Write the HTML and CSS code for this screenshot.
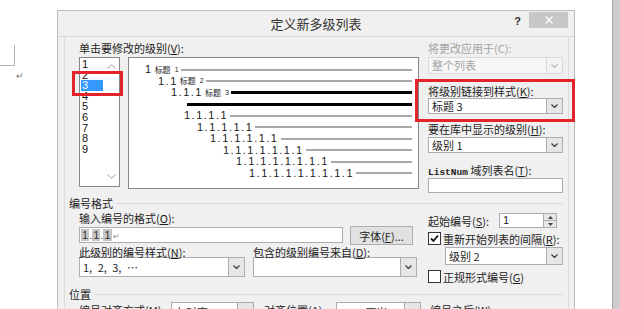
FILE: index.html
```html
<!DOCTYPE html>
<html lang="zh-CN">
<head>
  <meta charset="UTF-8">
  <title>定义新多级列表</title>
  <link rel="stylesheet" href="styles.css">
</head>
<body>
  <div class="doc">
    <div class="corner"></div>
    <div class="para-mark">↵</div>
  </div>

  <div class="dialog">
    <div class="titlebar">
      <span class="title">定义新多级列表</span>
      <div class="win-btns">
        <span class="help">?</span>
        <span class="close">
          <svg width="8" height="8" viewBox="0 0 8 8"><path d="M0.5 0.5L7.5 7.5M7.5 0.5L0.5 7.5" stroke="#fff" stroke-width="1.4"/></svg>
        </span>
      </div>
    </div>

    <div class="client">
      <div class="top">
        <div class="levels">
          <div class="label">单击要修改的级别(<u>V</u>):</div>
          <div class="level-row">
            <div class="level-list">
              <ul>
                <li>1</li>
                <li>2</li>
                <li class="selected">3</li>
                <li>4</li>
                <li>5</li>
                <li>6</li>
                <li>7</li>
                <li>8</li>
                <li>9</li>
              </ul>
              <div class="vscroll">
                <svg width="9" height="5" viewBox="0 0 9 5"><polyline points="0.5,4.5 4.5,0.8 8.5,4.5" fill="none" stroke="#c2c2c2" stroke-width="1.2"/></svg>
                <svg width="9" height="5" viewBox="0 0 9 5"><polyline points="0.5,0.5 4.5,4.2 8.5,0.5" fill="none" stroke="#c2c2c2" stroke-width="1.2"/></svg>
              </div>
              <div class="mark mark-level"></div>
            </div>
            <div class="preview">
              <div class="pv-row l1"><span class="num">1</span><span class="sty">标题</span><span class="sty-n">1</span><span class="rule"></span></div>
              <div class="pv-row l2"><span class="num">1.1</span><span class="sty">标题</span><span class="sty-n">2</span><span class="rule"></span></div>
              <div class="pv-row l3"><span class="num">1.1.1</span><span class="sty">标题</span><span class="sty-n">3</span><span class="rule strong"></span></div>
              <div class="pv-row wrap"><span class="rule strong"></span></div>
              <div class="pv-row l4"><span class="num">1.1.1.1</span><span class="rule"></span></div>
              <div class="pv-row l5"><span class="num">1.1.1.1.1</span><span class="rule"></span></div>
              <div class="pv-row l6"><span class="num">1.1.1.1.1.1</span><span class="rule"></span></div>
              <div class="pv-row l7"><span class="num">1.1.1.1.1.1.1</span><span class="rule"></span></div>
              <div class="pv-row l8"><span class="num">1.1.1.1.1.1.1.1</span><span class="rule"></span></div>
              <div class="pv-row l9"><span class="num">1.1.1.1.1.1.1.1.1</span><span class="rule"></span></div>
            </div>
          </div>
        </div>

        <div class="side">
          <div class="label off">将更改应用于(C):</div>
          <div class="combo disabled apply">
            <span class="value">整个列表</span>
            <span class="drop"><svg width="7" height="4" viewBox="0 0 7 4"><polyline points="0.5,0.5 3.5,3.5 6.5,0.5" fill="none" stroke="#b8b8b8" stroke-width="1.2"/></svg></span>
          </div>
          <div class="linked">
            <div class="label">将级别链接到样式(<u>K</u>):</div>
            <div class="combo link-style">
              <span class="value">标题 3</span>
              <span class="drop"><svg width="7" height="4" viewBox="0 0 7 4"><polyline points="0.5,0.5 3.5,3.5 6.5,0.5" fill="none" stroke="#404040" stroke-width="1.3"/></svg></span>
            </div>
            <div class="mark mark-style"></div>
          </div>
          <div class="label gap-l">要在库中显示的级别(<u>H</u>):</div>
          <div class="combo show-level">
            <span class="value">级别 1</span>
            <span class="drop"><svg width="7" height="4" viewBox="0 0 7 4"><polyline points="0.5,0.5 3.5,3.5 6.5,0.5" fill="none" stroke="#404040" stroke-width="1.3"/></svg></span>
          </div>
          <div class="label gap-xl"><span class="mono">ListNum</span> 域列表名(<u>T</u>):</div>
          <div class="textbox listnum"></div>
        </div>
      </div>

      <div class="group-title"><span>编号格式</span></div>
      <div class="group">
        <div class="format-left">
          <div class="label first">输入编号的格式(<u>O</u>):</div>
          <div class="format-row">
            <div class="textbox format-input">
              <span class="fld">1</span>.<span class="fld">1</span>.<span class="fld">1</span><span class="ret">↵</span>
            </div>
            <div class="button">字体(<u>F</u>)...</div>
          </div>
          <div class="style-grid">
            <div>
              <div class="label">此级别的编号样式(<u>N</u>):</div>
              <div class="combo tall">
                <span class="value spaced">1, 2, 3, …</span>
                <span class="drop"><svg width="7" height="4" viewBox="0 0 7 4"><polyline points="0.5,0.5 3.5,3.5 6.5,0.5" fill="none" stroke="#404040" stroke-width="1.3"/></svg></span>
              </div>
            </div>
            <div>
              <div class="label">包含的级别编号来自(<u>D</u>):</div>
              <div class="combo tall">
                <span class="value"></span>
                <span class="drop"><svg width="7" height="4" viewBox="0 0 7 4"><polyline points="0.5,0.5 3.5,3.5 6.5,0.5" fill="none" stroke="#404040" stroke-width="1.3"/></svg></span>
              </div>
            </div>
          </div>
        </div>

        <div class="format-right">
          <div class="start-row">
            <span>起始编号(<u>S</u>):</span>
            <div class="spinner">
              <span class="value">1</span>
              <span class="spin">
                <span><svg width="5" height="3" viewBox="0 0 5 3"><polygon points="2.5,0 5,3 0,3" fill="#404040"/></svg></span>
                <span><svg width="5" height="3" viewBox="0 0 5 3"><polygon points="0,0 5,0 2.5,3" fill="#404040"/></svg></span>
              </span>
            </div>
          </div>
          <div class="check-row restart">
            <span class="checkbox"><svg width="11" height="11" viewBox="0 0 11 11"><polyline points="2,5.5 4.5,8 9,2.5" fill="none" stroke="#111" stroke-width="1.8"/></svg></span>
            <span>重新开始列表的间隔(<u>R</u>):</span>
          </div>
          <div class="combo restart-level">
            <span class="value">级别 2</span>
            <span class="drop"><svg width="7" height="4" viewBox="0 0 7 4"><polyline points="0.5,0.5 3.5,3.5 6.5,0.5" fill="none" stroke="#404040" stroke-width="1.3"/></svg></span>
          </div>
          <div class="check-row legal">
            <span class="checkbox"></span>
            <span>正规形式编号(<u>G</u>)</span>
          </div>
        </div>
      </div>

      <div class="group-title pos"><span>位置</span></div>
      <div class="position-row">
        <span class="pos-label align">编号对齐方式(<u>M</u>):</span>
        <div class="combo tall align-combo">
          <span class="value">左对齐</span>
          <span class="drop"><svg width="7" height="4" viewBox="0 0 7 4"><polyline points="0.5,0.5 3.5,3.5 6.5,0.5" fill="none" stroke="#404040" stroke-width="1.3"/></svg></span>
        </div>
        <span class="pos-label at">对齐位置(<u>A</u>):</span>
        <div class="combo tall at-combo">
          <span class="value centered">0 厘米</span>
          <span class="drop"><svg width="5" height="3" viewBox="0 0 5 3"><polygon points="2.5,0 5,3 0,3" fill="#404040"/></svg></span>
        </div>
        <span class="pos-label after">编号之后(<u>W</u>):</span>
      </div>
    </div>
  </div>

  <div class="gap"></div>
  <div class="edge"></div>
</body>
</html>
```

FILE: styles.css
```css
* {
  box-sizing: border-box;
}
body {
  margin: 0;
  width: 620px;
  height: 309px;
  overflow: hidden;
  display: flex;
  background: #fff;
  font-family: "Noto Sans CJK SC", sans-serif;
  font-size: 11px;
  line-height: 12px;
  color: #1e1e1e;
}
u {
  text-underline-offset: 1px;
}

/* word page behind the dialog */
.doc {
  width: 57px;
  flex: none;
}
.corner {
  width: 15px;
  height: 21px;
  margin-top: 45px;
  border-right: 1px solid #b4b4b4;
  border-bottom: 1px solid #b4b4b4;
}
.para-mark {
  margin: 5px 0 0 16px;
  font-size: 9px;
  line-height: 10px;
  color: #7a7a7a;
}
.gap {
  flex: 1;
}
.edge {
  width: 8px;
  flex: none;
  background: #cdcdcd;
  border-left: 1px solid #a9a9a9;
}

/* dialog frame */
.dialog {
  width: 518px;
  height: 310px;
  margin-top: 10px;
  flex: none;
  background: #f0f0f0;
  border: 1px solid #bdbdbd;
  border-bottom: none;
}
.titlebar {
  height: 26px;
  display: grid;
  grid-template-columns: 1fr auto 1fr;
  border-bottom: 1px solid #d9d9d9;
}
.title {
  grid-column: 2;
  font-size: 13px;
  line-height: 25px;
  color: #333;
}
.win-btns {
  display: flex;
  justify-content: flex-end;
  align-items: flex-start;
}
.help {
  font: bold 11px "Liberation Sans", sans-serif;
  line-height: 16px;
  margin: 2px 8px 0 0;
  color: #333;
}
.close {
  width: 39px;
  height: 16px;
  margin: 1px 6px 0 0;
  background: #c7c7c7;
  display: flex;
  align-items: center;
  justify-content: center;
}
.client {
  height: 284px;
  margin: 0 5px 0 6px;
  padding: 0 4px;
  border: 1px solid #dcdcdc;
  border-top: none;
}

/* common controls */
.label {
  height: 12px;
  white-space: nowrap;
}
.label.off {
  color: #a3a3a3;
}
.mono {
  font-family: "Liberation Mono", monospace;
  font-size: 9.5px;
  font-weight: bold;
}
.combo {
  display: flex;
  height: 16px;
  background: #fff;
  border: 1px solid #abadb3;
}
.combo .value {
  flex: 1;
  padding-left: 3px;
  line-height: 14px;
  white-space: nowrap;
  overflow: hidden;
}
.combo .value.spaced {
  word-spacing: 3px;
}
.combo .drop {
  width: 16px;
  flex: none;
  display: flex;
  align-items: center;
  justify-content: center;
  background: #e6e6e6;
  border-left: 1px solid #acacac;
}
.combo.disabled {
  border-color: #d9d9d9;
  background: #f7f7f7;
  color: #a3a3a3;
}
.combo.disabled .drop {
  background: #f3f3f3;
  border-left-color: #dadada;
}
.combo.tall {
  height: 20px;
}
.combo.tall .value {
  line-height: 18px;
}
.textbox {
  background: #fff;
  border: 1px solid #abadb3;
}
.button {
  display: flex;
  align-items: center;
  justify-content: center;
  background: #e1e1e1;
  border: 1px solid #adadad;
}
.mark {
  position: absolute;
  border: 3px solid #e3242b;
}

/* top: levels, preview, link settings */
.top {
  display: flex;
  gap: 9px;
  padding: 5px 0 0 10px;
}
.levels {
  width: 340px;
}
.level-row {
  display: flex;
  gap: 8px;
  margin-top: 3px;
}
.level-list {
  position: relative;
  width: 41px;
  height: 130px;
  display: flex;
  background: #fff;
  border: 1px solid #828790;
}
.level-list ul {
  flex: 1;
  margin: 0;
  padding: 1px 0 0 1px;
  list-style: none;
  font-family: "Liberation Sans", sans-serif;
  font-size: 11px;
}
.level-list li {
  height: 10.6px;
  line-height: 10.6px;
  padding-left: 1px;
  color: #111;
}
.level-list li.selected {
  width: 22px;
  background: #3399ff;
  color: #fff;
}
.vscroll {
  width: 16px;
  display: flex;
  flex-direction: column;
  justify-content: space-between;
  align-items: center;
  padding: 6px 0 7px;
}
.mark-level {
  left: -8px;
  top: 13px;
  width: 51px;
  height: 25px;
}
.preview {
  width: 291px;
  height: 132px;
  padding: 6px 6px 0 0;
  background: #fff;
  border: 1px solid #828790;
}
.pv-row {
  display: flex;
  align-items: center;
  height: 11.5px;
  color: #222;
}
.pv-row.l1 { padding-left: 16px; }
.pv-row.l2 { padding-left: 29px; }
.pv-row.l3 { padding-left: 42px; }
.pv-row.wrap { padding-left: 58px; }
.pv-row.l4 { padding-left: 55px; }
.pv-row.l5 { padding-left: 68px; }
.pv-row.l6 { padding-left: 81px; }
.pv-row.l7 { padding-left: 94px; }
.pv-row.l8 { padding-left: 107px; }
.pv-row.l9 { padding-left: 120px; }
.num {
  font-family: "Liberation Sans", sans-serif;
  font-size: 11px;
  line-height: 11px;
  letter-spacing: 1.5px;
}
.sty {
  font-size: 8px;
  line-height: 10px;
  margin-left: 2px;
}
.sty-n {
  font-family: "Liberation Sans", sans-serif;
  font-size: 7px;
  line-height: 8px;
  margin-left: 4px;
}
.rule {
  flex: 1;
  height: 2px;
  margin-left: 2px;
  background: #a8a8a8;
}
.rule.strong {
  height: 3px;
  background: #000;
}
.pv-row.wrap .rule {
  margin-left: 0;
}

.side {
  width: 135px;
}
.combo.apply {
  height: 17px;
  margin-top: 3px;
}
.linked {
  position: relative;
  padding-top: 11px;
}
.combo.link-style {
  margin-top: 1px;
}
.mark-style {
  left: -13px;
  top: 5px;
  width: 160px;
  height: 43px;
}
.gap-l {
  margin-top: 9px;
}
.combo.show-level {
  margin-top: 2px;
}
.gap-xl {
  margin-top: 11px;
}
.listnum {
  height: 15px;
  margin-top: 2px;
}

/* groups */
.group-title {
  display: flex;
  align-items: center;
  margin-top: 4px;
  height: 12px;
}
.group-title::after {
  content: "";
  flex: 1;
  margin-left: 3px;
  border-top: 1px solid #dcdcdc;
}
.group-title.pos {
  margin-top: 5px;
}
.group {
  display: flex;
  gap: 9px;
  padding-left: 10px;
}
.format-left {
  width: 340px;
}
.label.first {
  margin-top: 3px;
}
.format-row {
  display: flex;
  gap: 7px;
  margin-top: 2px;
}
.format-input {
  width: 264px;
  height: 16px;
  margin-top: 1px;
  padding-left: 1px;
  font-family: "Liberation Sans", sans-serif;
  line-height: 14px;
  color: #333;
}
.fld {
  background: #c6c6c6;
  padding: 0 1px;
}
.ret {
  font-size: 8px;
  color: #8a8a8a;
  margin-left: 1px;
}
.format-row .button {
  width: 63px;
  height: 19px;
}
.style-grid {
  display: grid;
  grid-template-columns: 166px 164px;
  gap: 8px;
  margin-top: 1px;
}
.style-grid .label {
  height: 11px;
}

.format-right {
  width: 135px;
}
.start-row {
  display: flex;
  align-items: center;
  height: 15px;
  margin-top: 4px;
}
.spinner {
  display: flex;
  width: 58px;
  height: 15px;
  margin: 0 6px 0 auto;
  background: #fff;
  border: 1px solid #abadb3;
}
.spinner .value {
  flex: 1;
  padding-left: 3px;
  line-height: 13px;
  font-family: "Liberation Sans", sans-serif;
}
.spin {
  width: 13px;
  display: flex;
  flex-direction: column;
  border-left: 1px solid #acacac;
}
.spin span {
  flex: 1;
  display: flex;
  align-items: center;
  justify-content: center;
  background: #e6e6e6;
}
.spin span + span {
  border-top: 1px solid #acacac;
}
.check-row {
  display: flex;
  align-items: center;
  gap: 2px;
  height: 13px;
  white-space: nowrap;
}
.check-row.restart {
  margin-top: 4px;
}
.check-row.legal {
  margin-top: 5px;
}
.checkbox {
  width: 13px;
  height: 13px;
  flex: none;
  display: flex;
  align-items: center;
  justify-content: center;
  background: #fff;
  border: 1px solid #333;
}
.combo.restart-level {
  height: 18px;
  margin: 2px 0 0 17px;
}
.combo.restart-level .value {
  line-height: 16px;
}

.position-row {
  display: flex;
  align-items: flex-start;
  margin-top: 2px;
  padding-left: 10px;
}
.pos-label {
  line-height: 16px;
  white-space: nowrap;
}
.pos-label.align {
  width: 92px;
}
.pos-label.at {
  width: 72px;
  margin-left: 10px;
}
.pos-label.after {
  margin-left: 9px;
}
.align-combo {
  width: 83px;
}
.at-combo {
  width: 85px;
}
.value.centered {
  text-align: center;
}
```
